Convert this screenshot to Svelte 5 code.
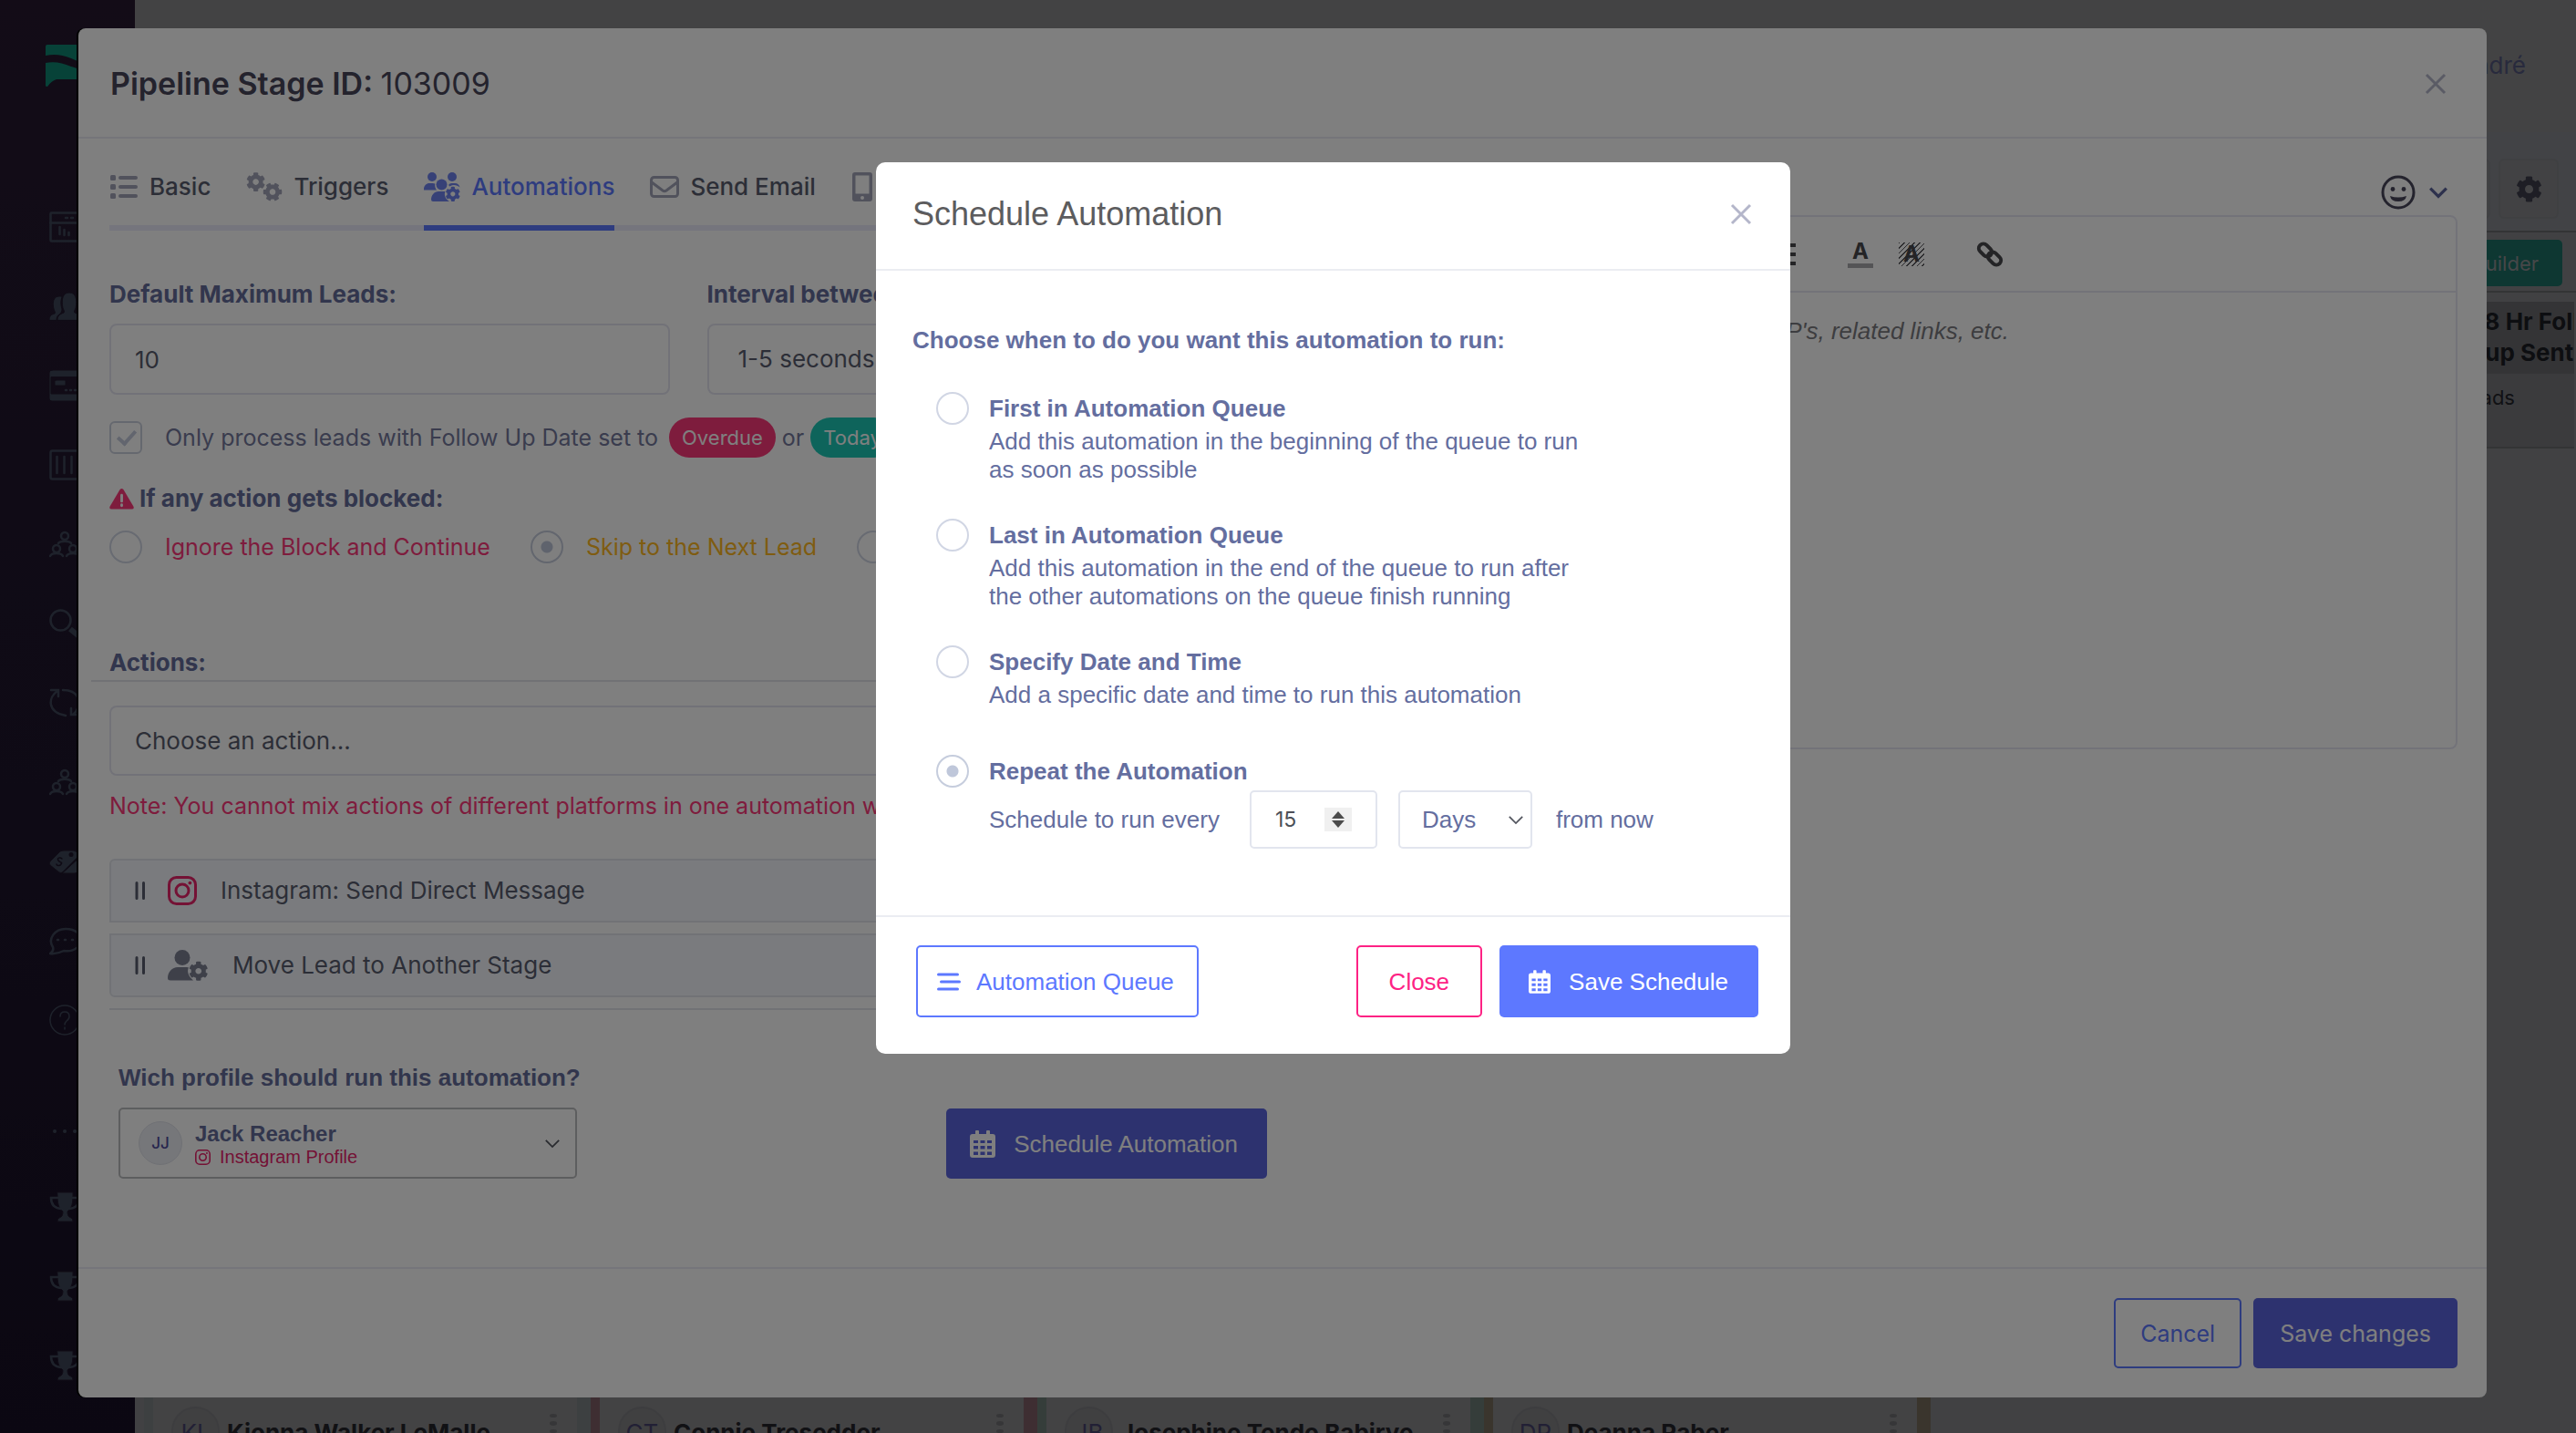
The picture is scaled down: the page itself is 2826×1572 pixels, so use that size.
<script>
  const gear =
    'M487.4 315.7l-42.6-24.6c4.3-23.2 4.3-47 0-70.2l42.6-24.6c4.9-2.8 7.1-8.6 5.5-14-11.1-35.6-30-67.8-54.7-94.6-3.8-4.1-10-5.1-14.8-2.3L380.8 110c-17.9-15.4-38.5-27.3-60.8-35.1V25.8c0-5.6-3.9-10.5-9.4-11.7-36.7-8.2-74.3-7.8-109.2 0-5.5 1.2-9.4 6.1-9.4 11.7V75c-22.2 7.9-42.8 19.8-60.8 35.1L88.7 85.5c-4.9-2.8-11-1.9-14.8 2.3-24.7 26.7-43.6 58.9-54.7 94.6-1.7 5.4.6 11.2 5.5 14L67.3 221c-4.3 23.2-4.3 47 0 70.2l-42.6 24.6c-4.9 2.8-7.1 8.6-5.5 14 11.1 35.6 30 67.8 54.7 94.6 3.8 4.1 10 5.1 14.8 2.3l42.6-24.6c17.9 15.4 38.5 27.3 60.8 35.1v49.2c0 5.6 3.9 10.5 9.4 11.7 36.7 8.2 74.3 7.8 109.2 0 5.5-1.2 9.4-6.1 9.4-11.7v-49.2c22.2-7.9 42.8-19.8 60.8-35.1l42.6 24.6c4.9 2.8 11 1.9 14.8-2.3 24.7-26.7 43.6-58.9 54.7-94.6 1.5-5.5-.7-11.3-5.6-14.1zM256 336c-44.1 0-80-35.9-80-80s35.9-80 80-80 80 35.9 80 80-35.9 80-80 80z';

  const nav = ['window', 'users', 'card', 'columns', 'team', 'search', 'sync', 'team', 'tags', 'chat', 'help', 'more', 'trophy', 'trophy', 'trophy'];

  const board = [
    { initials: 'KL', name: 'Kionna Walker LeMalle', tone: 'slate' },
    { initials: 'CT', name: 'Connie Tresedder', tone: 'rose' },
    { initials: 'JB', name: 'Josephine Tendo Babirye', tone: 'green' },
    { initials: 'DR', name: 'Deanna Raber', tone: 'sand' }
  ];

  const tabs = [
    { id: 'basic', label: 'Basic' },
    { id: 'triggers', label: 'Triggers' },
    { id: 'automations', label: 'Automations' },
    { id: 'email', label: 'Send Email' },
    { id: 'sms', label: '' }
  ];

  const options = [
    { id: 'first', title: 'First in Automation Queue', lines: ['Add this automation in the beginning of the queue to run', 'as soon as possible'] },
    { id: 'last', title: 'Last in Automation Queue', lines: ['Add this automation in the end of the queue to run after', 'the other automations on the queue finish running'] },
    { id: 'date', title: 'Specify Date and Time', lines: ['Add a specific date and time to run this automation'] }
  ];

  let activeTab = $state('automations');
  let blocked = $state('skip');
  let schedule = $state('repeat');
  let every = $state(15);
</script>

{#snippet cross()}
  <svg class="cross" viewBox="0 0 24 24" aria-hidden="true"><path d="M2 2L22 22M22 2L2 22" /></svg>
{/snippet}

{#snippet chevron()}
  <svg class="chevron" viewBox="0 0 20 12" aria-hidden="true"><path d="M2 2l8 8 8-8" /></svg>
{/snippet}

{#snippet instagram()}
  <svg class="insta" viewBox="0 0 32 32" aria-hidden="true">
    <rect x="1.5" y="1.5" width="29" height="29" rx="8" />
    <circle cx="16" cy="16" r="7" />
    <circle class="dot" cx="24.4" cy="7.6" r="1.9" />
  </svg>
{/snippet}

{#snippet calendar()}
  <svg class="calendar" viewBox="0 0 28 30" aria-hidden="true">
    <path
      fill-rule="evenodd"
      d="M7 0h2a1 1 0 0 1 1 1v3h8V1a1 1 0 0 1 1-1h2a1 1 0 0 1 1 1v3h3a3 3 0 0 1 3 3v20a3 3 0 0 1-3 3H3a3 3 0 0 1-3-3V7a3 3 0 0 1 3-3h3V1a1 1 0 0 1 1-1zM4 11v3h5v-3zM11.500 11v3h5v-3zM19 11v3h5v-3zM4 17v3.500h5V17zM11.500 17v3.500h5V17zM19 17v3.500h5V17zM4 23.500V27h5v-3.500zM11.500 23.500V27h5v-3.500zM19 23.500V27h5v-3.500z"
    />
  </svg>
{/snippet}

{#snippet tabIcon(id)}
  {#if id === 'basic'}
    <svg class="tab-icon w32" viewBox="0 0 32 28" aria-hidden="true">
      <rect x="1" y="1" width="6" height="6" rx="1.500" /><rect x="1" y="11" width="6" height="6" rx="1.500" /><rect x="1" y="21" width="6" height="6" rx="1.500" />
      <rect x="10" y="2" width="21" height="4" rx="2" /><rect x="10" y="12" width="21" height="4" rx="2" /><rect x="10" y="22" width="21" height="4" rx="2" />
    </svg>
  {:else if id === 'triggers'}
    <svg class="tab-icon w40" viewBox="0 0 40 32" aria-hidden="true">
      <path d={gear} transform="translate(0 0) scale(.0415)" />
      <path d={gear} transform="rotate(30 29 21.500) translate(18.400 10.900) scale(.0415)" />
    </svg>
  {:else if id === 'automations'}
    <svg class="tab-icon w40" viewBox="0 0 40 32" aria-hidden="true">
      <circle cx="9" cy="5" r="5" /><circle cx="31" cy="5" r="5" /><circle cx="19.500" cy="13.500" r="6" />
      <path d="M0 19.500v-1c0-4 3-6.500 6-6.500h3.500c1 0 2 .2 2.700.6-.3 2.600.3 5 1.800 6.900zM27 14c.8-1.300 2-2 3.500-2h3.500c3 0 5 2 5.500 4.500-3-2.500-7-3.500-11-1z" />
      <path d="M8 30c0-5 3.500-9 8-9h7.500c-1.500 3-.5 8 4.500 11H10a2 2 0 0 1-2-2z" />
      <path d={gear} transform="translate(23.500 15.500) scale(.0325)" />
    </svg>
  {:else if id === 'email'}
    <svg class="tab-icon line w32" viewBox="0 0 32 26" aria-hidden="true">
      <rect x="1.500" y="2.500" width="29" height="21" rx="3" /><path d="M2 8l12 9q2 1.400 4 0l12-9" />
    </svg>
  {:else}
    <svg class="tab-icon w24" viewBox="0 0 24 32" aria-hidden="true">
      <path fill-rule="evenodd" d="M4 0h16a3 3 0 0 1 3 3v26a3 3 0 0 1-3 3H4a3 3 0 0 1-3-3V3a3 3 0 0 1 3-3zM4.500 3.500v20h15v-20zM12 26a2 2 0 1 0 0 4 2 2 0 0 0 0-4z" />
    </svg>
  {/if}
{/snippet}

{#snippet navIcon(id)}
  <svg class="nav-icon" viewBox="0 0 40 34" aria-hidden="true">
    {#if id === 'window'}
      <rect x="1.500" y="1.500" width="37" height="31" rx="1" /><path d="M1 12.500h38M18 7h2M24 7h2M11.500 17v8M16.500 20v6M21.500 23v3" />
    {:else if id === 'users'}
      <path class="fill" d="M0 32c0-4 2-6 6-7 1-1 0-2-1-5-2-8 0-14 6-14 2 0 3 0 3 1-2 5-1 10 0 13 0 3-1 4-3 6-2 1-3 3-3 6z" />
      <path class="fill" d="M9 32c0-4 2-6 7-8 1-1 0-3-1-5-2-10 0-17 7-17s9 7 7 17c-1 2-2 4-1 5 5 2 8 4 8 8z" />
    {:else if id === 'card'}
      <path class="fill" fill-rule="evenodd" d="M3 0h34a3 3 0 0 1 3 3v28a3 3 0 0 1-3 3H3a3 3 0 0 1-3-3V3a3 3 0 0 1 3-3zM2 8v18h36V8z" />
      <rect class="fill" x="6" y="11" width="12" height="6" rx="1" /><path d="M18 22h1M23 22h1M28 22h1" />
    {:else if id === 'columns'}
      <rect x="1.500" y="1.500" width="37" height="31" rx="2" /><path d="M8.500 8v18M16.500 8v18M24.500 8v18M32 8v18" />
    {:else if id === 'team'}
      <circle cx="17" cy="8" r="4" /><circle cx="8" cy="22" r="4" /><circle cx="26" cy="22" r="4" />
      <path d="M10 16c2-3 12-3 14 0M1 30c2-4 12-4 14 0M19 30c2-4 12-4 14 0" />
    {:else if id === 'search'}
      <circle cx="12.500" cy="13.500" r="11" /><path class="thick" d="M23 23l11 9" />
    {:else if id === 'sync'}
      <path d="M2 3h8v7M9 4C-1 11-3 27 18 31M15 3c20 0 22 18 11 27M24 23v7h8" />
    {:else if id === 'tags'}
      <path class="fill" d="M1 21q-2-2 0-4L12 6q2-1 4-1h11q5 1 8 7L15 29q-2 1-4 0z" />
      <path class="cut" d="M37 8L14 31" /><path class="fill" d="M31 15v12q0 3-3 3H14.500z" />
      <path class="cut thin" d="M14 14c-2-2-6-1-4 2s5 1 3 4-5 1-5 0" /><circle class="hole" cx="24" cy="9.500" r="2.500" />
    {:else if id === 'chat'}
      <path d="M1 31c3-2 4-4 3-7-6-9 2-20 14-20s17 7 17 12-6 14-19 12q-8 4-15 3z" /><path d="M9 16h1M17 16h1M25 16h1" />
    {:else if id === 'help'}
      <circle class="thin" cx="17" cy="17" r="16" /><path class="thin" d="M12 13q0-5 5-5t5 5q0 3-3 5-2 2-2 4M17 25v2" />
    {:else if id === 'more'}
      <path class="dotted" d="M6 17h.1M17 17h.1M28 17h.1" />
    {:else}
      <path class="fill" d="M9 1h17v3c0 9-1 14-6 18 0 4 1 6 4 7q2 1 2 4H9q0-3 2-4c3-1 4-3 4-7C10 18 9 13 9 4z" />
      <path d="M9 7H2q0 11 11 12M26 7h7q0 11-11 12" />
    {/if}
  </svg>
{/snippet}

<div class="app">
  <nav class="sidebar" aria-label="Main">
    <a class="logo" href="#home" aria-label="Home">
      <svg viewBox="0 0 62 48" aria-hidden="true">
        <path d="M0 2q0-2 2-2h60v22C46 25 38 19 28 15 18 11 10 10 0 12z" />
        <path d="M0 20c10-2 18 0 28 4 10 3 20 8 34 4v10H12q-6 2-10 8-2 0-2-1z" />
      </svg>
    </a>
    {#each nav as id}
      <a class="nav-link" class:more={id === 'more'} href="#{id}" aria-label={id}>{@render navIcon(id)}</a>
    {/each}
  </nav>

  <div class="page">
    <header class="topbar"><span>André</span></header>
    <div class="toolbar">
      <button class="tool" type="button" aria-label="Filter"></button>
      <button class="tool" type="button" aria-label="Settings"><svg viewBox="0 0 512 512" aria-hidden="true"><path d={gear} /></svg></button>
    </div>
    <div class="builder-bar"><button class="builder" type="button">Builder</button></div>
    <section class="stage">
      <h3>48 Hr Follow<br />&nbsp;-up Sent</h3>
      <p>0 Leads</p>
    </section>
    <div class="board">
      {#each board as lead}
        <div class="column {lead.tone}">
          <article class="lead">
            <span class="lead-avatar">{lead.initials}</span>
            <strong>{lead.name}</strong>
            <span class="dots"><i></i><i></i><i></i></span>
          </article>
        </div>
      {/each}
    </div>
  </div>

  <div class="stage-layer">
    <section class="stage-modal" aria-label="Pipeline stage">
      <header class="stage-head">
        <h1>Pipeline Stage ID: <span>103009</span></h1>
        <button class="close" type="button" aria-label="Close stage">{@render cross()}</button>
      </header>

      <div class="stage-body">
        <div class="left">
          <div class="tabs" role="tablist">
            {#each tabs as tab}
              <button type="button" role="tab" class="tab" class:active={activeTab === tab.id} aria-label={tab.label || 'Messages'} aria-selected={activeTab === tab.id} onclick={() => (activeTab = tab.id)}>
                {@render tabIcon(tab.id)}{tab.label}
              </button>
            {/each}
          </div>

          <div class="fields">
            <div class="field">
              <label for="max-leads">Default Maximum Leads:</label>
              <input id="max-leads" class="box" type="text" value="10" />
            </div>
            <div class="field">
              <label for="interval">Interval between actions:</label>
              <select id="interval" class="box wide-pad"><option>1-5 seconds</option></select>
            </div>
          </div>

          <label class="check">
            <input type="checkbox" checked />
            <span>Only process leads with Follow Up Date set to</span>
            <span class="badge red">Overdue</span>
            <span class="or">or</span>
            <span class="badge teal">Today</span>
          </label>

          <div class="blocked-title">
            <svg viewBox="0 0 28 24" aria-hidden="true"><path class="tri" d="M12 1.500q2-2 4 0L27.500 21q1 3-2 3h-23q-3 0-2-3z" /><path class="bang" d="M14 8v7M14 19v1" /></svg>
            If any action gets blocked:
          </div>
          <div class="blocked">
            <label class="pink"><input type="radio" value="ignore" bind:group={blocked} />Ignore the Block and Continue</label>
            <label class="amber"><input type="radio" value="skip" bind:group={blocked} />Skip to the Next Lead</label>
            <label class="pink"><input type="radio" value="stop" bind:group={blocked} />Stop</label>
          </div>

          <label class="actions-label" for="action">Actions:</label>
          <hr class="rule out" />
          <select id="action" class="box action"><option>Choose an action...</option></select>
          <p class="note">Note: You cannot mix actions of different platforms in one automation workflow</p>

          <ul class="rows">
            <li class="row top">
              <svg class="grip" viewBox="0 0 12 20" aria-hidden="true"><path d="M2 1.500v17M9.500 1.500v17" /></svg>
              {@render instagram()}
              <span class="row-text">Instagram: Send Direct Message</span>
            </li>
            <li class="row bottom">
              <svg class="grip" viewBox="0 0 12 20" aria-hidden="true"><path d="M2 1.500v17M9.500 1.500v17" /></svg>
              <svg class="person" viewBox="0 0 45 34" aria-hidden="true">
                <circle cx="16" cy="8.500" r="8.500" />
                <path d="M0 31c0-7 5-12 11-12h9c1.500 0 2.500.2 3 .5-2 3-1 9 5 14H3q-3 0-3-2.500z" />
                <path d={gear} transform="translate(23 12.500) scale(.042)" />
              </svg>
              <span class="row-text">Move Lead to Another Stage</span>
            </li>
          </ul>
          <hr class="rule end" />

          <div class="profile-row">
            <div class="profile">
              <div class="profile-label" id="profile-label">Wich profile should run this automation?</div>
              <button class="profile-select" type="button" aria-labelledby="profile-label" aria-haspopup="listbox">
                <span class="avatar">JJ</span>
                <span class="who"><strong>Jack Reacher</strong><span class="net">{@render instagram()}Instagram Profile</span></span>
                {@render chevron()}
              </button>
            </div>
            <button class="btn solid-dark helv with-icon" type="button">{@render calendar()}Schedule Automation</button>
          </div>
        </div>

        <div class="right">
          <button class="emoji" type="button" aria-label="Insert emoji">
            <svg class="smile" viewBox="0 0 38 38" aria-hidden="true">
              <circle class="ring" cx="19" cy="19" r="17" /><circle cx="13" cy="15.500" r="2.400" /><circle cx="25" cy="15.500" r="2.400" /><path d="M10 23q9 3 18 0-1 6-9 6t-9-6z" />
            </svg>
            {@render chevron()}
          </button>
          <div class="editor">
            <div class="editor-bar">
              <button type="button" aria-label="List"><svg class="i-list" viewBox="0 0 28 24" aria-hidden="true"><path d="M0 2h28M0 12h28M0 22h28" /></svg></button>
              <button type="button" aria-label="Text color"><span class="letter under">A</span></button>
              <button type="button" aria-label="Highlight"><span class="letter hatch">A</span></button>
              <button type="button" aria-label="Link" class="link">
                <svg viewBox="0 0 30 30" aria-hidden="true"><rect x="2" y="5.500" width="16" height="10" rx="5" transform="rotate(45 10 10.500)" /><rect x="12" y="14.500" width="16" height="10" rx="5" transform="rotate(45 20 19.500)" /></svg>
              </button>
            </div>
            <div class="placeholder">Add notes about this stage, SOP's, related links, etc.</div>
          </div>
        </div>
      </div>

      <footer class="stage-foot">
        <button class="btn outline" type="button">Cancel</button>
        <button class="btn solid-dark" type="button">Save changes</button>
      </footer>
    </section>
  </div>

  <div class="dialog-layer">
    <div class="dialog" role="dialog" aria-modal="true" aria-labelledby="dialog-title">
      <header class="dialog-head">
        <h2 id="dialog-title">Schedule Automation</h2>
        <button class="close" type="button" aria-label="Close dialog">{@render cross()}</button>
      </header>
      <div class="dialog-body">
        <p class="lead-in">Choose when to do you want this automation to run:</p>
        {#each options as option}
          <label class="option">
            <input type="radio" name="schedule" value={option.id} bind:group={schedule} />
            <span class="copy">
              <strong>{option.title}</strong>
              {#each option.lines as line}<span class="line">{line}</span>{/each}
            </span>
          </label>
        {/each}
        <div class="option repeat">
          <input id="repeat" type="radio" name="schedule" value="repeat" bind:group={schedule} />
          <div class="copy">
            <label for="repeat"><strong>Repeat the Automation</strong></label>
            <div class="every">
              <label class="text" for="every">Schedule to run every</label>
              <span class="number">
                <input id="every" type="number" bind:value={every} />
                <span class="spin" aria-hidden="true"><svg viewBox="0 0 14 18"><path d="M7 0l7 8H0zM7 18L0 10h14z" /></svg></span>
              </span>
              <span class="unit">
                <select aria-label="Unit"><option>Days</option><option>Hours</option></select>
                {@render chevron()}
              </span>
              <span class="text">from now</span>
            </div>
          </div>
        </div>
      </div>
      <footer class="dialog-foot">
        <button class="btn outline helv queue" type="button">
          <svg class="bars" viewBox="0 0 26 20" aria-hidden="true"><path d="M1.500 2h21M4.500 10h20M1.500 18h21" /></svg>Automation Queue
        </button>
        <button class="btn danger helv" type="button">Close</button>
        <button class="btn primary helv with-icon" type="button">{@render calendar()}Save Schedule</button>
      </footer>
    </div>
  </div>
</div>

<style>
  :global(body) { margin: 0; background: #434345; }
  * { box-sizing: border-box; }
  h1, h2, h3, p, ul { margin: 0; padding: 0; }
  button, input, select { font: inherit; color: inherit; margin: 0; }
  button { cursor: pointer; }

  .app { position: relative; display: flex; min-height: 100vh; overflow: hidden; font: 400 25px/32px Inter, "Liberation Sans", sans-serif; color: #595d6e; }

  /* page behind the modals */
  .sidebar { width: 148px; flex: none; height: 100vh; padding-top: 49px; display: flex; flex-direction: column; overflow: hidden; background: linear-gradient(#26192f, #1d152b 55%, #170f24); }
  .logo { height: 156px; flex: none; padding-left: 50px; }
  .logo svg { width: 62px; height: 48px; fill: #0e8571; }
  .nav-link { height: 87px; flex: none; padding-left: 54px; display: flex; align-items: center; }
  .nav-link.more { height: 118px; padding-top: 40px; }
  .nav-icon { width: 40px; height: 34px; fill: none; stroke: #3d4557; stroke-width: 2.500; stroke-linecap: round; }
  .nav-icon .fill { fill: #3d4557; stroke: #20182c; stroke-width: 1; }
  .nav-icon .cut { stroke: #1c1428; stroke-width: 3; }
  .nav-icon .hole { fill: #1c1428; stroke: none; }
  .nav-icon .thick { stroke-width: 6; stroke-linecap: butt; }
  .nav-icon .thin { stroke-width: 1.500; }
  .nav-icon .dotted { stroke-width: 4; }
  .page { flex: 1; min-width: 0; height: 100vh; display: flex; flex-direction: column; background: #828386; }
  .topbar { height: 145px; flex: none; display: flex; justify-content: flex-end; padding: 56px 55px 0 0; background: #868688; color: #50547a; font-size: 26px; }
  .toolbar { height: 110px; flex: none; display: flex; justify-content: flex-end; align-items: flex-start; gap: 9px; padding: 29px 19px 0 0; background: #85878c; border-bottom: 2px solid #67686b; }
  .tool { width: 66px; height: 66px; padding: 0; display: grid; place-items: center; border: 2px solid #7e8084; border-radius: 6px; background: #848488; }
  .tool svg { width: 29px; height: 29px; fill: #3c3d4b; }
  .builder-bar { height: 66px; flex: none; display: flex; justify-content: flex-end; padding: 8px 15px 0 0; border-bottom: 2px solid #67686b; }
  .builder { width: 150px; height: 51px; padding: 0 26px 0 0; border: 0; border-radius: 5px; background: #1d6e64; color: #8d8f92; font-size: 22px; text-align: right; }
  .stage { align-self: flex-end; width: 150px; height: 171px; margin: 0 2px 0 0; border-top: 10px solid #828386; border-bottom: 2px solid #67686b; background: #76777b; overflow: hidden; color: #222329; }
  .stage h3 { height: 79px; padding: 5px 0 0 34px; background: #68696d; font-size: 26px; line-height: 34px; white-space: nowrap; font-weight: 700; color: #1b1c22; }
  .stage p { padding: 10px 0 0 2px; font-size: 22px; }
  .board { flex: 1; min-height: 0; display: flex; padding-left: 10px; }
  .column { width: 490px; flex: none; display: flex; align-items: flex-end; padding: 0 15px 0 10px; }
  .slate { background: #7a8082; }
  .rose { background: #7d5c65; }
  .green { background: #6b7a74; }
  .sand { background: #756b5a; }
  .lead { flex: 1; height: 40px; padding: 11px 22px 0 20px; display: flex; overflow: hidden; background: #868688; color: #222228; font-size: 26px; white-space: nowrap; }
  .lead strong { flex: 1; margin-left: 8px; line-height: 58px; font-weight: 700; }
  .lead-avatar { width: 53px; height: 53px; flex: none; border-radius: 50%; border: 2px solid #7b7b7f; background: #808083; color: #45406a; text-align: center; line-height: 54px; }
  .dots { display: flex; flex-direction: column; gap: 4px; padding-top: 8px; }
  .dots i { width: 8px; height: 8px; border-radius: 50%; background: #6d6d70; }

  /* stage modal */
  .stage-layer { position: absolute; inset: 0; padding: 31px 98px 39px 86px; }
  .stage-modal { background: #fff; border-radius: 8px; box-shadow: -2px 0 0 #000; }
  .stage-head { height: 121px; padding: 2px 44px 0 35px; display: flex; align-items: center; justify-content: space-between; border-bottom: 2px solid #ebebf4; }
  h1 { font-size: 34px; line-height: 40px; font-weight: 600; color: #48465b; }
  h1 span { font-weight: 400; }
  .close { width: 24px; height: 24px; padding: 0; border: 0; background: none; display: grid; }
  .cross { width: 24px; height: 24px; fill: none; stroke: #b4b6ca; stroke-width: 3; }
  .stage-body { display: grid; grid-template-columns: 1270fr 1266fr; gap: 40px; padding: 27px 32px 97px 34px; }
  .left, .right { min-width: 0; }
  .tabs { display: flex; gap: 39px; height: 74px; box-shadow: inset 0 -6px #ebebfa; font-size: 26px; font-weight: 500; }
  .tab { display: flex; align-items: center; gap: 12px; padding: 0 0 16px; border: 0; border-bottom: 6px solid transparent; background: none; white-space: nowrap; }
  .tab.active { color: #5d78ff; border-color: #5d78ff; }
  .tab-icon { fill: #a2a5b9; }
  .tab-icon.line { fill: none; stroke: #a2a5b9; stroke-width: 3; }
  .active .tab-icon { fill: #6f83ef; }
  .w24 { width: 24px; height: 32px; }
  .w32 { width: 32px; height: 28px; }
  .w40 { width: 40px; height: 32px; }
  .fields { display: grid; grid-template-columns: 1fr 1fr; gap: 41px; margin-top: 54px; }
  .field { display: flex; flex-direction: column; gap: 16px; }
  .field label, .actions-label, .blocked-title { font-size: 26px; font-weight: 700; color: #646c9a; }
  .box { width: 100%; height: 78px; padding: 0 26px; border: 2px solid #e4e4f0; border-radius: 8px; background: #fff; appearance: none; color: #595d6e; font-size: 26px; }
  .wide-pad { padding-left: 32px; }
  .check { display: flex; align-items: center; height: 44px; margin-top: 25px; color: #74799c; white-space: nowrap; }
  .check input { appearance: none; position: relative; width: 36px; height: 36px; flex: none; margin-right: 25px; border: 2px solid #cbd0de; border-radius: 6px; }
  .check input::after { content: ""; position: absolute; left: 11px; top: 4px; width: 8px; height: 16px; border: solid #c4cbdc; border-width: 0 4px 4px 0; transform: rotate(42deg); }
  .badge { height: 44px; padding: 0 14px; border-radius: 22px; color: #fff; font-size: 22px; line-height: 44px; }
  .red { margin-left: 12px; background: #fd397a; }
  .teal { background: #1dc9b7; }
  .or { margin: 0 7px; }
  .blocked-title { display: flex; align-items: center; gap: 6px; margin-top: 29px; }
  .blocked-title svg { width: 27px; height: 24px; }
  .tri { fill: #fd397a; }
  .bang { stroke: #fff; stroke-width: 3; stroke-linecap: round; }
  .blocked { display: flex; gap: 44px; height: 36px; margin-top: 19px; white-space: nowrap; }
  .blocked label { display: flex; align-items: center; gap: 25px; }
  .pink { color: #fd397a; }
  .amber { color: #ffb822; }
  input[type="radio"] { appearance: none; width: 36px; height: 36px; flex: none; border: 2px solid #d1d6e4; border-radius: 50%; }
  input[type="radio"]:checked { background: radial-gradient(circle, #bfc7da 6px, transparent 7px); border-color: #c6cddd; }
  .actions-label { display: block; margin-top: 93px; }
  .rule { height: 2px; border: 0; margin: 0; background: #e3e4ea; }
  .rule.out { margin: 3px 0 26px -20px; }
  .rule.end { margin-top: 12px; }
  .action { display: block; height: 77px; }
  .note { margin-top: 17px; color: #fd397a; white-space: nowrap; }
  .rows { margin-top: 42px; list-style: none; display: grid; gap: 12px; }
  .row { height: 70px; padding-left: 26px; display: flex; align-items: center; background: #f4f7fc; border: 2px solid #e2e5ec; color: #595d6e; font-size: 26px; }
  .row.top { border-radius: 6px 6px 0 0; }
  .row.bottom { border-radius: 0 0 6px 6px; }
  .grip { width: 12px; height: 20px; fill: none; stroke: #595d6e; stroke-width: 3; stroke-linecap: round; }
  .insta { width: 32px; height: 32px; margin-left: 24px; fill: none; stroke: #e8256b; stroke-width: 3; }
  .insta .dot { fill: #e8256b; stroke: none; }
  .person { width: 45px; height: 34px; margin-left: 24px; fill: #7c8093; }
  .row-text { margin-left: 26px; }
  .profile-row { display: flex; justify-content: space-between; align-items: flex-end; margin: 58px 0 0 10px; font-family: "Liberation Sans", Arial, sans-serif; }
  .profile { width: 503px; font-size: 26px; color: #646c9a; }
  .profile-label { font-weight: 700; white-space: nowrap; }
  .profile-select { width: 100%; height: 78px; margin-top: 17px; padding: 0 16px 0 20px; display: flex; align-items: center; border: 2px solid #bbbcbf; border-radius: 5px; background: #fff; text-align: left; }
  .avatar { width: 48px; height: 48px; border-radius: 50%; background: #eceef4; border: 1px solid #e0e2ea; color: #4f4a9c; font: 500 17px/46px Inter, sans-serif; text-align: center; }
  .who { flex: 1; display: flex; flex-direction: column; margin-left: 14px; padding-top: 4px; font-size: 24px; line-height: 26px; }
  .net { display: flex; align-items: center; gap: 10px; font-size: 20px; line-height: 24px; color: #e8256b; }
  .net .insta { width: 17px; height: 17px; margin: 0; }
  .chevron { width: 18px; height: 11px; fill: none; stroke: #53565f; stroke-width: 2; }
  .btn { height: 77px; padding: 0 27px; border: 2px solid transparent; border-radius: 5px; white-space: nowrap; }
  .helv { font-family: "Liberation Sans", Arial, sans-serif; font-size: 26px; }
  .with-icon { display: flex; align-items: center; gap: 20px; }
  .calendar { width: 28px; height: 30px; fill: currentColor; }
  .solid-dark { background: #5a64df; color: #fff; }
  .outline { border-color: #5d78ff; background: none; color: #5d78ff; }
  .profile-row .btn { padding: 0 30px 0 24px; }

  .right { padding-top: 13px; display: flex; flex-direction: column; align-items: stretch; }
  .emoji { align-self: flex-end; display: flex; align-items: center; gap: 14px; padding: 0 10px 0 0; border: 0; background: none; }
  .smile { width: 38px; height: 38px; fill: #48465b; }
  .smile .ring { fill: none; stroke: #48465b; stroke-width: 3; }
  .emoji .chevron { width: 22px; height: 14px; stroke: #5a629a; stroke-width: 3; }
  .editor { height: 586px; margin-top: 6px; border: 2px solid #e6e6f2; border-radius: 8px; }
  .editor-bar { height: 83px; display: flex; align-items: center; padding-left: 510px; border-bottom: 2px solid #e6e6f2; }
  .editor-bar button { padding: 0; border: 0; background: none; display: grid; place-items: center; width: 28px; height: 32px; margin-right: 28px; color: #48484c; }
  .editor-bar button:first-child { margin-right: 57px; }
  .i-list { width: 28px; height: 24px; stroke: #48484c; stroke-width: 4; }
  .letter { font-weight: 700; font-size: 24px; line-height: 26px; width: 28px; }
  .under { border-bottom: 5px solid #a9a9ad; }
  .hatch { background: repeating-linear-gradient(135deg, #58585c 0 1px, #fff 1px 4px); }
  .editor-bar button.link { margin-left: 29px; }
  .link svg { width: 30px; height: 30px; fill: none; stroke: #48484c; stroke-width: 4; }
  .placeholder { padding: 26px 490px 0 0; text-align: right; white-space: nowrap; font: italic 400 26px/32px "Liberation Sans", Arial, sans-serif; color: #7a7a80; }
  .stage-foot { height: 143px; padding: 32px 32px 0; display: flex; justify-content: flex-end; align-items: flex-start; gap: 13px; border-top: 2px solid #ebebf6; }

  /* schedule dialog */
  .dialog-layer { position: absolute; inset: 0; padding: 178px 0 0 99px; display: flex; justify-content: center; align-items: flex-start; background: rgba(0, 0, 0, .5); font-family: "Liberation Sans", Arial, sans-serif; font-size: 26px; }
  .dialog { width: 1003px; border-radius: 10px; background: #fff; color: #646e9f; }
  .dialog-head { height: 119px; padding: 0 42px 4px 40px; display: flex; align-items: center; justify-content: space-between; border-bottom: 2px solid #ebedf2; }
  h2 { font-size: 36px; line-height: 40px; font-weight: 400; color: #5c5c5e; }
  .dialog-body { padding: 60px 40px 73px; }
  .lead-in { margin-bottom: 41px; font-weight: 700; }
  .option { display: flex; gap: 22px; padding-left: 26px; }
  .option + .option { margin-top: 38px; }
  .option + .option.repeat { margin-top: 50px; }
  .copy { display: flex; flex-direction: column; }
  .copy strong { line-height: 36px; margin-bottom: 3px; display: block; }
  .line { line-height: 31px; }
  .every { display: flex; align-items: center; height: 64px; white-space: nowrap; }
  .number, .unit { display: flex; align-items: center; height: 64px; border: 2px solid #e2e5ee; border-radius: 5px; }
  .number { width: 140px; margin-left: 33px; padding: 0 26px; }
  .number input { flex: 1; min-width: 0; padding: 0; border: 0; outline: 0; appearance: textfield; background: none; font: 400 23px/30px Inter, sans-serif; color: #4c4f57; }
  .number input::-webkit-inner-spin-button { appearance: none; }
  .spin { width: 30px; height: 26px; display: grid; place-items: center; background: #f0f0f0; }
  .spin svg { width: 14px; height: 18px; fill: #4c4c4c; }
  .unit { position: relative; width: 147px; margin: 0 26px 0 23px; }
  .unit select { width: 100%; height: 60px; padding: 0 0 0 24px; border: 0; appearance: none; background: none; }
  .unit .chevron { position: absolute; right: 7px; pointer-events: none; }
  .dialog-foot { display: flex; align-items: center; padding: 31px 35px 40px 44px; border-top: 2px solid #ebedf2; }
  .dialog-foot .btn { height: 79px; }
  .queue { display: flex; align-items: center; gap: 17px; padding: 0 25px 0 21px; margin-right: auto; }
  .bars { width: 26px; height: 20px; stroke: #5d78ff; stroke-width: 3; stroke-linecap: round; }
  .danger { padding: 0 34px; margin-right: 19px; border-color: #fd2284; background: #fff; color: #fd2284; }
  .primary { background: #5d78ff; color: #fff; padding: 0 31px 0 30px; }
  .primary .calendar { width: 24px; height: 26px; }
</style>
